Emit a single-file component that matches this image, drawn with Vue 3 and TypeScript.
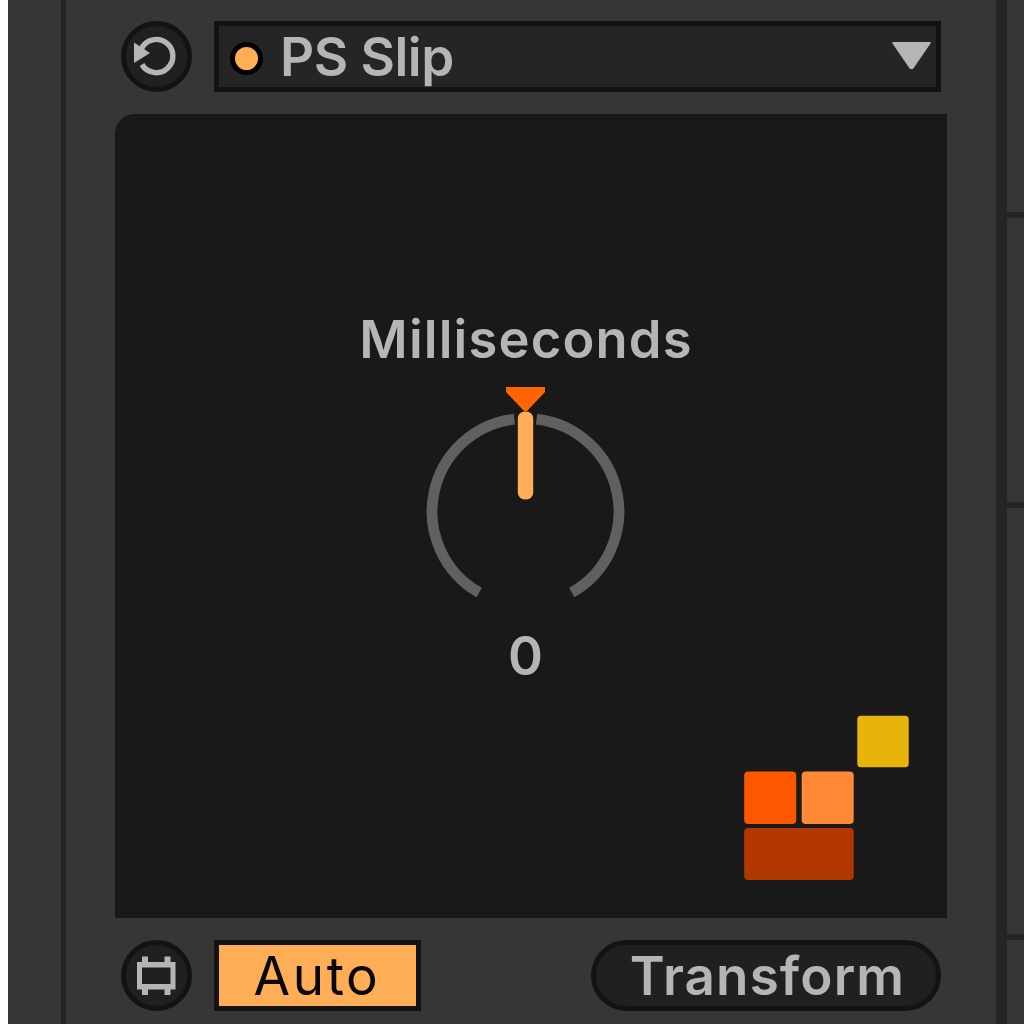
<script setup lang="ts">
import { ref } from 'vue'

const device = ref<string>('PS Slip')
const parameter = ref<string>('Milliseconds')
const value = ref<number>(0)
</script>

<template>
  <main class="window">
    <div class="rail"></div>
    <section class="panel">
      <header class="row top">
        <button class="round" aria-label="Reset">
          <svg viewBox="0 0 71 71" width="71" height="71">
            <path d="M20.5 27.5 A16.6 16.6 0 1 1 21 43.5" fill="none" stroke="#b5b5b5" stroke-width="5.4" />
            <path d="M13 21.5 L29 32 L13 42 Z" fill="#b5b5b5" />
          </svg>
        </button>
        <button class="select">
          <span class="dot"></span>
          <span class="label device">{{ device }}</span>
          <svg class="caret" viewBox="0 0 39 28" width="39" height="28">
            <path d="M0.5 0 H38.5 V1.5 L21 27 H18 L0.5 1.5 Z" fill="#b5b5b5" />
          </svg>
        </button>
      </header>

      <div class="display">
        <span class="label parameter">{{ parameter }}</span>
        <svg class="dial" viewBox="0 0 200 214" width="200" height="214">
          <path d="M89.4 34.2 A93 93 0 0 0 54.2 207.5" fill="none" stroke="#606060" stroke-width="10.8" />
          <path d="M111.6 34.2 A93 93 0 0 1 146.8 207.5" fill="none" stroke="#606060" stroke-width="10.8" />
          <path d="M81 2 H120 V7 L102 26 H99 L81 7 Z" fill="#ff6500" />
          <rect x="92.8" y="26.5" width="15.4" height="88" rx="7" fill="#ffad56" />
        </svg>
        <span class="label value">{{ value }}</span>
        <svg class="blocks" viewBox="0 0 165 165" width="165" height="165">
          <rect x="113.3" y="0.7" width="51.4" height="51.6" rx="3.5" fill="#e8b30b" />
          <rect x="0.2" y="56.5" width="52" height="52.5" rx="4" fill="#ff5600" />
          <rect x="57.7" y="56.5" width="52" height="52.5" rx="4" fill="#ff8934" />
          <rect x="0.2" y="113" width="109.5" height="52" rx="4" fill="#b33800" />
        </svg>
      </div>

      <footer class="row bottom">
        <button class="round" aria-label="Frame">
          <svg viewBox="0 0 71 71" width="71" height="71">
            <path d="M16 22 H54.5 V49.5 H16 Z M21 27.5 V44 H49.5 V27.5 Z" fill="#b5b5b5" fill-rule="evenodd" />
            <path d="M21 16.5 h6 v6 h-6z M43.5 16.5 h6 v6 h-6z M21 49 h6 v6 h-6z M43.5 49 h6 v6 h-6z" fill="#b5b5b5" />
          </svg>
        </button>
        <button class="auto"><span class="label auto-text">Auto</span></button>
        <button class="transform"><span class="label transform-text">Transform</span></button>
      </footer>
    </section>
    <aside class="side">
      <div class="cell first"></div>
      <div class="cell second"></div>
      <div class="cell third"></div>
      <div class="cell"></div>
    </aside>
  </main>
</template>

<style>
body {
  margin: 0;
  overflow: hidden;
}
</style>

<style scoped>
* {
  box-sizing: border-box;
}
.window {
  width: 1024px;
  height: 1024px;
  display: flex;
  background: #363636;
  border-left: 8px solid #fff;
  font-family: Inter, "Liberation Sans", sans-serif;
  color: #b5b5b5;
  overflow: hidden;
}
.rail {
  width: 58px;
  flex: none;
  border-right: 5px solid #252525;
}
.panel {
  width: 930px;
  flex: none;
  padding: 21px 49px 0;
  display: flex;
  flex-direction: column;
}
.row {
  display: flex;
  height: 71px;
  flex: none;
  padding: 0 6px;
}
button {
  font: inherit;
  color: inherit;
  padding: 0;
  margin: 0;
}
.round {
  width: 71px;
  height: 71px;
  flex: none;
  border: 5px solid #131313;
  border-radius: 50%;
  background: #202020;
  display: flex;
  align-items: center;
  justify-content: center;
}
.round svg {
  flex: none;
}
.select {
  margin-left: 22px;
  flex: 1;
  border: 5px solid #131313;
  background: #252525;
  display: flex;
  align-items: center;
  padding: 0 5px 0 11px;
}
.dot {
  width: 33px;
  height: 33px;
  flex: none;
  border: 5px solid #000;
  border-radius: 50%;
  background: #ffad56;
  margin-top: 4px;
}
.label {
  display: block;
  white-space: nowrap;
  line-height: 60px;
  font-size: 53px;
}
.device {
  margin-left: 17px;
  font-weight: 600;
  letter-spacing: -0.5px;
}
.caret {
  margin-left: auto;
  margin-bottom: 1px;
}
.display {
  margin-top: 22px;
  width: 832px;
  height: 804px;
  flex: none;
  background: #191919;
  border-top-left-radius: 20px;
  display: flex;
  flex-direction: column;
  align-items: center;
  padding-top: 195px;
}
.parameter {
  font-weight: 600;
  font-size: 52.5px;
  letter-spacing: 1.15px;
  margin-right: 10px;
}
.dial {
  margin-top: 16px;
  margin-right: 13px;
  flex: none;
}
.value {
  font-weight: 600;
  margin-top: 27px;
  margin-right: 11px;
}
.blocks {
  align-self: flex-end;
  margin: 29px 38px 0 0;
  flex: none;
}
.bottom {
  margin-top: 22px;
}
.auto {
  margin-left: 22px;
  width: 207px;
  flex: none;
  border: 5px solid #131313;
  background: #ffad56;
  color: #080808;
  display: flex;
  align-items: center;
  justify-content: center;
}
.auto-text {
  font-weight: 400;
  letter-spacing: 2.6px;
  margin-right: 1px;
}
.transform {
  margin-left: auto;
  width: 350px;
  flex: none;
  border: 5px solid #131313;
  border-radius: 36px;
  background: #202020;
  display: flex;
  align-items: center;
  justify-content: center;
}
.transform-text {
  font-weight: 600;
  letter-spacing: 1.1px;
  margin-left: 3px;
}
.side {
  flex: 1;
  border-left: 11px solid #252525;
  display: flex;
  flex-direction: column;
}
.cell {
  flex: 1;
}
.first,
.second,
.third {
  flex: none;
  border-bottom: 6px solid #252525;
}
.first {
  height: 218px;
}
.second {
  height: 290px;
}
.third {
  height: 432px;
}
</style>
